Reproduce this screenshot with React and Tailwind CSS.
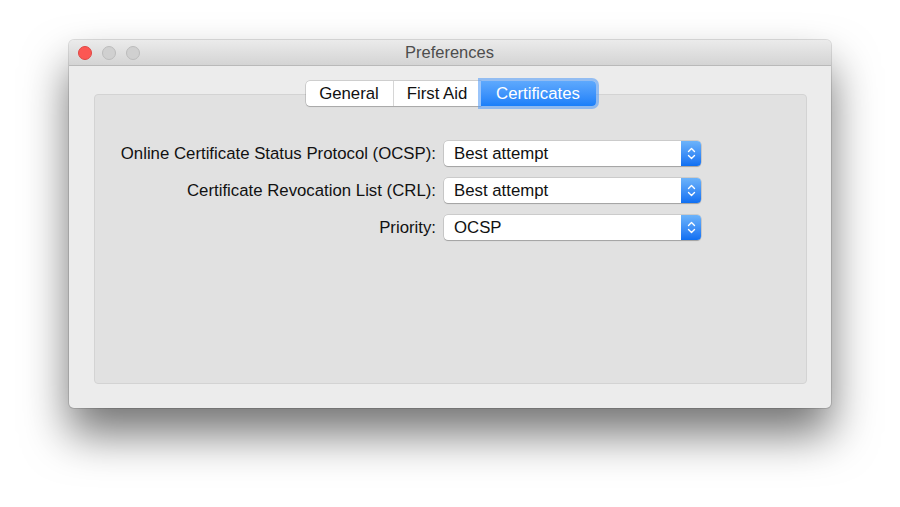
import React from "react";

const font = { fontFamily: '"Liberation Sans", Arial, sans-serif' };

const Stepper = () => (
  <div className="w-[20px] h-full rounded-r-[4px] bg-gradient-to-b from-[#6cb3fa] to-[#0d6ff2] flex items-center justify-center">
    <svg width="9" height="15" viewBox="0 0 9 15" fill="none" stroke="white" strokeWidth="1.4" strokeLinecap="round" strokeLinejoin="round">
      <path d="M1.5 5.5 L4.5 2.5 L7.5 5.5" />
      <path d="M1.5 9.5 L4.5 12.5 L7.5 9.5" />
    </svg>
  </div>
);

const PopUp = ({ value }) => (
  <div className="w-[257px] h-[25px] bg-white rounded-[4px] flex items-stretch shadow-[0_0_0_0.5px_rgba(0,0,0,0.2),0_1px_1px_rgba(0,0,0,0.2)]">
    <div className="flex-1 pl-[10px] flex items-center text-[16.8px] text-[#111]">{value}</div>
    <Stepper />
  </div>
);

const Row = ({ label, value }) => (
  <div className="flex items-center h-[25px]">
    <div className="w-[349px] pr-[8px] text-right text-[16.8px] text-[#111]">{label}</div>
    <PopUp value={value} />
  </div>
);

export default function App() {
  return (
    <div className="w-[900px] h-[507px] bg-white overflow-hidden" style={font}>
      <div className="pt-[40px] pl-[69px]">
        <div className="w-[762px] h-[368px] rounded-[5px] bg-[#ececec] flex flex-col shadow-[0_0_0_1px_rgba(0,0,0,0.12),0_26px_45px_rgba(0,0,0,0.55)] overflow-hidden">
          {/* Title bar */}
          <div className="h-[26px] bg-gradient-to-b from-[#ebebeb] to-[#d4d4d4] border-b border-[#b9b9b9] flex items-center relative">
            <div className="flex gap-[10px] pl-[9px]">
              <div className="w-[14px] h-[14px] rounded-full bg-[#fc5753] border border-[#df4744]" />
              <div className="w-[14px] h-[14px] rounded-full bg-[#d0d0d0] border border-[#bcbcbc]" />
              <div className="w-[14px] h-[14px] rounded-full bg-[#d0d0d0] border border-[#bcbcbc]" />
            </div>
            <div className="flex-1 text-center text-[16.5px] text-[#4d4d4d] pr-[72px]">Preferences</div>
          </div>

          {/* Content */}
          <div className="flex-1 px-[24px] pb-[24px] pt-[15px] pl-[25px] flex flex-col">
            <div className="flex justify-center relative z-10">
              <div className="flex items-stretch h-[25px] text-[16.8px]">
                <div className="flex bg-white rounded-l-[4px] shadow-[0_0_0_0.5px_rgba(0,0,0,0.25),0_1px_1px_rgba(0,0,0,0.15)]">
                  <div className="w-[88px] flex items-center justify-center text-[#111] border-r border-[#d6d6d6]">General</div>
                  <div className="w-[87px] flex items-center justify-center text-[#111]">First Aid</div>
                </div>
                <div className="w-[115px] flex items-center justify-center text-white rounded-r-[4px] bg-gradient-to-b from-[#5ea9fd] to-[#1a7ff9] shadow-[0_0_0_3px_rgba(89,158,246,0.6)]">
                  Certificates
                </div>
              </div>
            </div>
            <div className="-mt-[12px] flex-1 bg-[#e1e1e1] border border-[#d3d3d3] rounded-[4px] pt-[46px] flex flex-col gap-[12px]">
              <Row label="Online Certificate Status Protocol (OCSP):" value="Best attempt" />
              <Row label="Certificate Revocation List (CRL):" value="Best attempt" />
              <Row label="Priority:" value="OCSP" />
            </div>
          </div>
        </div>
      </div>
    </div>
  );
}
